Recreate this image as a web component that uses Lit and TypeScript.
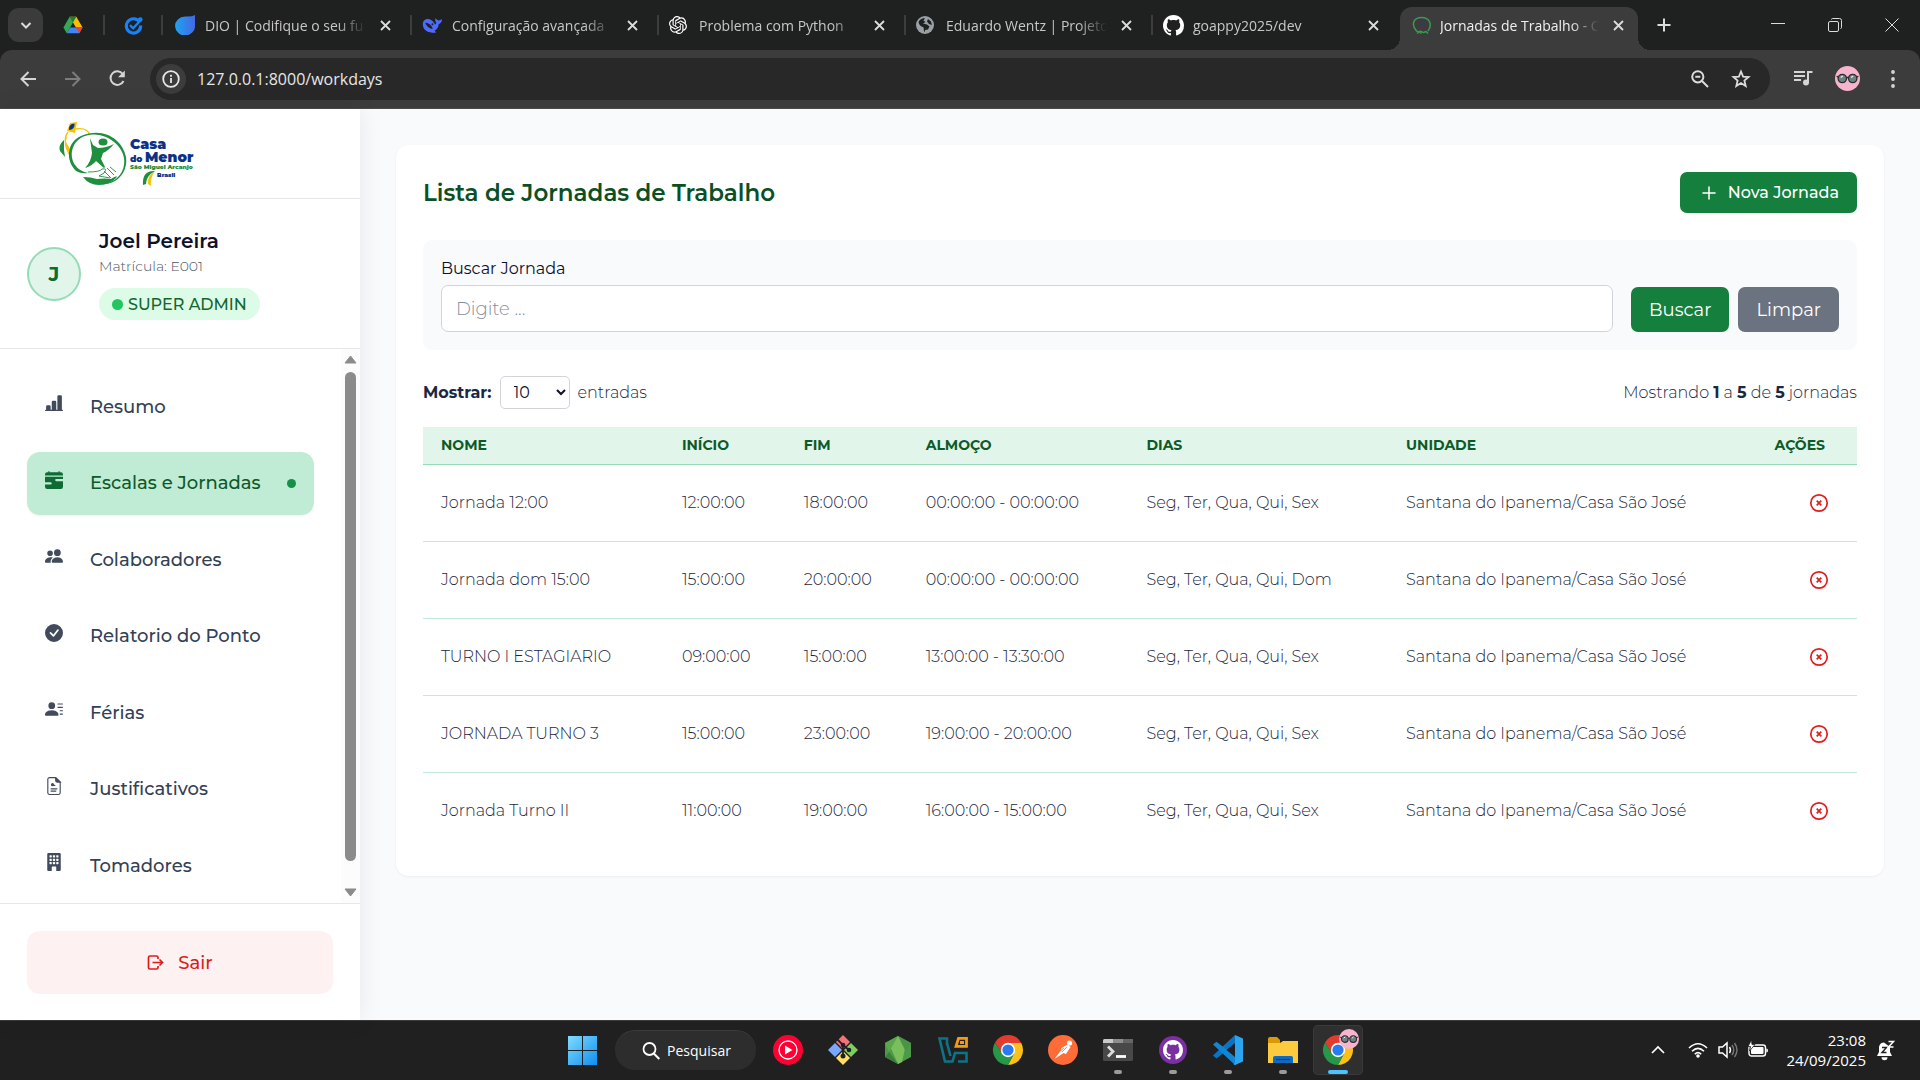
import { LitElement, html, css, svg, nothing } from "lit";
import { customElement, property } from "lit/decorators.js";
import { classMap } from "lit/directives/class-map.js";

const GITHUB =
  "M8 0C3.58 0 0 3.58 0 8c0 3.54 2.29 6.53 5.47 7.59.4.07.55-.17.55-.38 0-.19-.01-.82-.01-1.49-2.01.37-2.53-.49-2.69-.94-.09-.23-.48-.94-.82-1.13-.28-.15-.68-.52-.01-.53.63-.01 1.08.58 1.23.82.72 1.21 1.87.87 2.33.66.07-.52.28-.87.51-1.07-1.78-.2-3.64-.89-3.64-3.95 0-.87.31-1.59.82-2.15-.08-.2-.36-1.02.08-2.12 0 0 .67-.21 2.2.82.64-.18 1.32-.27 2-.27s1.36.09 2 .27c1.53-1.04 2.2-.82 2.2-.82.44 1.1.16 1.92.08 2.12.51.56.82 1.27.82 2.15 0 3.07-1.87 3.75-3.65 3.95.29.25.54.73.54 1.48 0 1.07-.01 1.93-.01 2.2 0 .21.15.46.55.38A8.01 8.01 0 0 0 16 8c0-4.42-3.58-8-8-8";

const OPENAI =
  "M22.2819 9.8211a5.9847 5.9847 0 0 0-.5157-4.9108 6.0462 6.0462 0 0 0-6.5098-2.9A6.0651 6.0651 0 0 0 4.9807 4.1818a5.9847 5.9847 0 0 0-3.9977 2.9 6.0462 6.0462 0 0 0 .7427 7.0966 5.98 5.98 0 0 0 .511 4.9107 6.051 6.051 0 0 0 6.5146 2.9001A5.9847 5.9847 0 0 0 13.2599 24a6.0557 6.0557 0 0 0 5.7718-4.2058 5.9894 5.9894 0 0 0 3.9977-2.9001 6.0557 6.0557 0 0 0-.7475-7.0729zm-9.022 12.6081a4.4755 4.4755 0 0 1-2.8764-1.0408l.1419-.0804 4.7783-2.7582a.7948.7948 0 0 0 .3927-.6813v-6.7369l2.02 1.1686a.071.071 0 0 1 .038.0615v5.5826a4.504 4.504 0 0 1-4.4945 4.4849zm-9.6607-4.1254a4.4708 4.4708 0 0 1-.5346-3.0137l.142.0852 4.783 2.7582a.7712.7712 0 0 0 .7806 0l5.8428-3.3685v2.3324a.0804.0804 0 0 1-.0332.0615L9.74 19.9502a4.4992 4.4992 0 0 1-6.1408-1.6464zM2.3408 7.8956a4.485 4.485 0 0 1 2.3655-1.9728V11.6a.7664.7664 0 0 0 .3879.6765l5.8144 3.3543-2.0201 1.1685a.0757.0757 0 0 1-.071 0l-4.8303-2.7865A4.504 4.504 0 0 1 2.3408 7.872zm16.5963 3.8558L13.1038 8.364 15.1192 7.2a.0757.0757 0 0 1 .071 0l4.8303 2.7913a4.4944 4.4944 0 0 1-.6765 8.1042v-5.6772a.79.79 0 0 0-.407-.667zm2.0107-3.0231l-.142-.0852-4.7735-2.7818a.7759.7759 0 0 0-.7854 0L9.409 9.2297V6.8974a.0662.0662 0 0 1 .0284-.0615l4.8303-2.7866a4.4992 4.4992 0 0 1 6.6802 4.66zM8.3065 12.863l-2.02-1.1638a.0804.0804 0 0 1-.038-.0567V6.0742a4.4992 4.4992 0 0 1 7.3757-3.4537l-.142.0805L8.704 5.459a.7948.7948 0 0 0-.3927.6813zm1.0976-2.3654l2.602-1.4998 2.6069 1.4998v2.9994l-2.5974 1.4997-2.6067-1.4997Z";

const icon = (size: number, box: string, body: unknown) =>
  html`<svg width=${size} height=${size} viewBox=${box} aria-hidden="true">${body}</svg>`;

/* ---------- shared pictures ---------- */

const glasses = svg`
  <circle cx="12" cy="12" r="12" fill="#f7b4cc"/>
  <g stroke="#2e2e30" stroke-width="1.300">
    <circle cx="7" cy="12" r="4" fill="#6d8183"/>
    <circle cx="17" cy="12" r="4" fill="#6d8183"/>
    <path d="M1.500 10l2 .6M22.500 10l-2 .6M11 11h2" fill="none"/>
  </g>
  <path d="M5.500 11l2-1.500M15.500 11l2-1.500" stroke="#e9f0f0" stroke-width="1.200"/>`;

const chromeMark = svg`
  <path d="M15 8h13.300A15 15 0 0 0 2 7.500L8.900 18.500z" fill="#e33b2e"/>
  <path d="M21.100 18.500L15 30A15 15 0 0 0 28.300 8H15z" fill="#fbc116"/>
  <path d="M8.900 18.500L2 7.500A15 15 0 0 0 15 30l6.100-11.500z" fill="#279847"/>
  <circle cx="15" cy="15" r="7.200" fill="#fff"/>
  <circle cx="15" cy="15" r="5.600" fill="#2b7bf0"/>`;

const favicons: Record<string, unknown> = {
  drive: icon(20, "0 0 24 24", svg`
    <path d="M8 2h8l7.500 13h-8z" fill="#fbbc04"/>
    <path d="M8 2L.5 15l4 7L12 9z" fill="#34a853"/>
    <path d="M8 2h8l-4 7z" fill="#188038"/>
    <path d="M4.500 22h15l4-7H8.500z" fill="#4285f4"/>
    <path d="M23.500 15l-4 7-4-7z" fill="#ea4335"/>`),
  tasks: icon(19, "0 0 24 24", svg`
    <path d="M19.500 7.500A9 9 0 1 0 21 12" fill="none" stroke="#1a82f7" stroke-width="4"/>
    <circle cx="20.500" cy="4.500" r="3" fill="#1a82f7"/>
    <path d="M7.500 11.500l4 4 9-9.500" fill="none" stroke="#1a82f7" stroke-width="3"/>`),
  dio: icon(20, "0 0 20 20", svg`
    <defs><linearGradient id="dio"><stop stop-color="#1fa3ee"/><stop offset="1" stop-color="#4468e6"/></linearGradient></defs>
    <path d="M10 1.500Q17 2 20 0V10A10 9.500 0 1 1 10 1.500z" fill="url(#dio)"/>`),
  whale: icon(20, "0 0 24 24", svg`
    <path d="M1 11C1 5 7 3.500 11 6c3 1.800 3.500 4.500 5.500 5.500C18 9.500 15 7 16 4c1.500 1 2 2.500 4 2.500 1.500 0 2.300-1 4-1.500-.2 3.500-1.500 5-4 6-.2 4-2.500 6.500-5 8l2 2c-3 .6-5 .5-7-.3C4.500 20 1 16 1 11z" fill="#4d6bfe"/>
    <path d="M4 9.500c3-.5 7 2 9 7-4 0-7.500-3-9-7z" fill="#1f2120"/><circle cx="12.500" cy="11" r="1.200" fill="#1f2120"/>`),
  openai: icon(18, "0 0 24 24", svg`<path d=${OPENAI} fill="#fff"/>`),
  globe: icon(18, "0 0 18 18", svg`
    <circle cx="9" cy="9" r="9" fill="#9aa0a6"/>
    <path d="M2.500 6C4 3 6.500 2 9 2L7.500 4.500l2 1.500-2.500 1.500 4 1 2.500 2-1.500 3-3 .5V16C7 15 8.500 12 7 11c-2-.5-4-2-4.500-5zM12 3l3 2.500L16 9l-3-1-2-2.500z" fill="#1f2120"/>`),
  github: icon(21, "0 0 16 16", svg`<path d=${GITHUB} fill="#fff"/>`),
  casa: icon(20, "0 0 20 20", svg`
    <path d="M4.500 16C-1.500 9 2 2.500 9.500 2.500S21 9 16 16M4 16q3 0 5.500 2.500M5 18.500q3-3 4.500-2 2 2 4 0 1 0 2.500 2" fill="none" stroke="#3c9950" stroke-width="1.500"/>
    <path d="M1.500 0l3 2M10 6l2 1-3 4 3 3" fill="none" stroke="#32309c" stroke-width="1"/>`),
};

/* ---------- browser frame ---------- */

interface Tab { icon: string; title: string; active?: boolean }

const TABS: Tab[] = [
  { icon: "dio", title: "DIO | Codifique o seu fu" },
  { icon: "whale", title: "Configuração avançada" },
  { icon: "openai", title: "Problema com Python" },
  { icon: "globe", title: "Eduardo Wentz | Projeto" },
  { icon: "github", title: "goappy2025/dev" },
  { icon: "casa", title: "Jornadas de Trabalho - C", active: true },
];

const cross = icon(11, "0 0 11 11", svg`<path d="M1 1l9 9M10 1l-9 9" stroke="currentColor" stroke-width="1.800"/>`);
const line = (d: string, w = 2) =>
  svg`<path d=${d} fill="none" stroke="currentColor" stroke-width=${w} />`;

@customElement("browser-frame")
class BrowserFrame extends LitElement {
  static styles = css`
    :host { display: block; background: #1f2120; color: #dcdcdc; font-family: "Segoe UI", "Open Sans", "Noto Sans", sans-serif; }
    button { border: 0; background: none; color: inherit; padding: 0; font: inherit; display: grid; place-items: center; flex: none; }
    svg { display: block; flex: none; }
    .tabs { display: flex; align-items: center; height: 50px; padding-left: 8px; }
    .picker { width: 35px; height: 34px; border-radius: 11px; background: #3b3b3b; }
    .pinned { width: 58px; height: 20px; display: grid; place-items: center; border-right: 2px solid #3c3d3c; box-sizing: border-box; }
    .pinned:first-of-type { width: 62px; }
    .tab { flex: 0 1 247px; min-width: 0; display: flex; align-items: center; box-sizing: border-box; padding: 0 19px 0 12px; height: 43px; font-size: 14px; }
    .tab .pic { width: 30px; flex: none; }
    .title { flex: 1; min-width: 0; overflow: hidden; white-space: nowrap; color: #c7c7c7; mask-image: linear-gradient(90deg, #000 82%, transparent); }
    .tab button { margin-left: 14px; }
    .tick { width: 2px; height: 20px; margin-right: -2px; background: #3c3d3c; flex: none; }
    .active { flex-basis: 238px; align-self: flex-end; background: #3c3c3c; border-radius: 12px 12px 0 0; padding: 0 14px 7px 12px; margin-left: 2px; position: relative; }
    .active .title { color: #f0f0f0; }
    .active .pic { width: 28px; }
    .active::before, .active::after { content: ""; position: absolute; bottom: 0; width: 12px; height: 12px; }
    .active::before { left: -12px; background: radial-gradient(circle at 0 0, transparent 12px, #3c3c3c 12px); }
    .active::after { right: -12px; background: radial-gradient(circle at 12px 0, transparent 12px, #3c3c3c 12px); }
    .new { width: 52px; height: 40px; }
    .window { margin-left: auto; display: flex; }
    .window button { width: 57px; height: 40px; }
    .bar { display: flex; align-items: center; background: #3c3c3c; height: 59px; box-sizing: border-box; padding: 0 5px 1px 5px; border-radius: 12px 12px 0 0; border-bottom: 1px solid #4a4a4a; }
    .bar > button { width: 45px; height: 42px; color: #d5d5d5; }
    .bar > button.dim { color: #7d7d7d; }
    .omni { flex: 1; height: 42px; border-radius: 21px; background: #282828; display: flex; align-items: center; margin: 0 10px 0 10px; padding: 0 9px 0 6px; }
    .omni .info { width: 30px; height: 30px; border-radius: 15px; background: #3c3c3c; color: #e8e8e8; }
    .omni input { flex: 1; min-width: 0; border: 0; background: none; color: #e6e6e6; font: inherit; font-size: 16px; padding: 0 0 0 11px; outline: 0; }
    .omni .tool { width: 41px; height: 36px; }
  `;

  render() {
    return html`
      <div class="tabs">
        <button class="picker" aria-label="Pesquisar guias">${icon(12, "0 0 12 12", line("M1.500 4l4.500 4.500L10.500 4"))}</button>
        <div class="pinned">${favicons.drive}</div>
        <div class="pinned">${favicons.tasks}</div>
        ${TABS.map((t, i) => html`
          <div class=${classMap({ tab: true, active: !!t.active })}>
            <span class="pic">${favicons[t.icon]}</span>
            <span class="title">${t.title}</span>
            <button aria-label="Fechar guia">${cross}</button>
          </div>
          ${i < TABS.length - 2 ? html`<span class="tick"></span>` : nothing}`)}
        <button class="new" aria-label="Nova guia">${icon(14, "0 0 14 14", line("M7 .5v13M.5 7h13"))}</button>
        <div class="window">
          <button aria-label="Minimizar">${icon(14, "0 0 14 14", line("M0 5.500h14", 1))}</button>
          <button aria-label="Restaurar">${icon(14, "0 0 14 14", svg`<rect x=".5" y="3.500" width="10" height="10" rx="1.500" fill="none" stroke="currentColor"/><path d="M3.500 1.500q0-1 1-1h7q2 0 2 2v7q0 1-1 1" fill="none" stroke="currentColor"/>`)}</button>
          <button aria-label="Fechar">${icon(14, "0 0 14 14", line("M.5 .5l13 13M13.500 .5l-13 13", 1))}</button>
        </div>
      </div>
      <div class="bar">
        <button aria-label="Voltar">${icon(16, "0 0 16 16", line("M16 8H2M8.500 1L1.500 8l7 7"))}</button>
        <button class="dim" aria-label="Avançar">${icon(16, "0 0 16 16", line("M0 8h14M7.500 1l7 7-7 7"))}</button>
        <button aria-label="Recarregar">${icon(17, "0 0 17 17", svg`${line("M14.500 11A6.800 6.800 0 1 1 13.800 4")}<path d="M15.800 .5v6.800H9z" fill="currentColor"/>`)}</button>
        <div class="omni">
          <button class="info" aria-label="Informações do site">${icon(18, "0 0 18 18", svg`<circle cx="9" cy="9" r="7.800" fill="none" stroke="currentColor" stroke-width="1.800"/><path d="M9 8v5M9 4.800v1.900" stroke="currentColor" stroke-width="1.800"/>`)}</button>
          <input aria-label="Endereço" value="127.0.0.1:8000/workdays" />
          <button class="tool" aria-label="Zoom">${icon(18, "0 0 18 18", svg`<circle cx="6.800" cy="6.800" r="5.600" fill="none" stroke="currentColor" stroke-width="2"/>${line("M11 11l6 6M4.300 6.800h5")}`)}</button>
          <button class="tool" aria-label="Favoritos">${icon(20, "0 0 20 20", line("M10 2.500l2.100 5.100 5.500.4-4.200 3.600 1.300 5.400-4.700-2.900L5.300 17l1.300-5.400L2.400 8l5.500-.4z", 1.8))}</button>
        </div>
        <button aria-label="Mídia">${icon(20, "0 0 20 20", svg`${line("M1 3h11M1 7h11M1 11h7")}<circle cx="13" cy="13.500" r="3" fill="currentColor"/>${line("M15 14V3h4.500", 2)}`)}</button>
        <button aria-label="Perfil">${icon(25, "0 0 24 24", glasses)}</button>
        <button aria-label="Menu">${icon(18, "0 0 18 18", svg`<g fill="currentColor"><circle cx="9" cy="2" r="1.900"/><circle cx="9" cy="9" r="1.900"/><circle cx="9" cy="16" r="1.900"/></g>`)}</button>
      </div>`;
  }
}

/* ---------- side navigation ---------- */

const windows = [4, 7, 10].flatMap((x) => [2, 5, 8].map((y) =>
  svg`<rect x=${x} y=${y} width="2" height="2" rx=".4" fill="#fff"/>`));

const NAV = [
  { label: "Resumo", pic: svg`<path d="M11 2a1 1 0 0 1 1-1h2a1 1 0 0 1 1 1v12h.5a.5.5 0 0 1 0 1H.5a.5.5 0 0 1 0-1H1v-3a1 1 0 0 1 1-1h2a1 1 0 0 1 1 1v3h1V7a1 1 0 0 1 1-1h2a1 1 0 0 1 1 1v7h1z"/>` },
  { label: "Escalas e Jornadas", active: true, pic: svg`<path d="M4 .5a.5.5 0 0 0-1 0V1H2a2 2 0 0 0-2 2v1h16V3a2 2 0 0 0-2-2h-1V.5a.5.5 0 0 0-1 0V1H4zM16 7V5H0v5h5a1 1 0 1 1 0 2H0v2a2 2 0 0 0 2 2h12a2 2 0 0 0 2-2V9h-6a1 1 0 1 1 0-2z"/>` },
  { label: "Colaboradores", pic: svg`<path d="M7 14s-1 0-1-1 1-4 5-4 5 3 5 4-1 1-1 1zm4-6a3 3 0 1 0 0-6 3 3 0 0 0 0 6m-5.784 6A2.24 2.24 0 0 1 5 13c0-1.355.68-2.75 1.936-3.72A6.3 6.3 0 0 0 5 9c-4 0-5 3-5 4s1 1 1 1zM4.500 8a2.500 2.500 0 1 0 0-5 2.500 2.500 0 0 0 0 5"/>` },
  { label: "Relatorio do Ponto", pic: svg`<path d="M16 8A8 8 0 1 1 0 8a8 8 0 0 1 16 0m-3.970-3.030a.75.75 0 0 0-1.080.022L7.477 9.417 5.384 7.323a.75.75 0 0 0-1.060 1.060L6.970 11.030a.75.75 0 0 0 1.079-.02l3.992-4.990a.75.75 0 0 0-.01-1.050z"/>` },
  { label: "Férias", pic: svg`<path d="M6 8a3 3 0 1 0 0-6 3 3 0 0 0 0 6m-5 6s-1 0-1-1 1-4 6-4 6 3 6 4-1 1-1 1zM11 3.500a.5.5 0 0 1 .5-.5h4a.5.5 0 0 1 0 1h-4a.5.5 0 0 1-.5-.5m.5 2.500a.5.5 0 0 0 0 1h4a.5.5 0 0 0 0-1zm2 3a.5.5 0 0 0 0 1h2a.5.5 0 0 0 0-1zm0 3a.5.5 0 0 0 0 1h2a.5.5 0 0 0 0-1z"/>` },
  { label: "Justificativos", pic: svg`<path d="M9.500.5H4a1.500 1.500 0 0 0-1.500 1.500v12A1.500 1.500 0 0 0 4 15.500h8a1.500 1.500 0 0 0 1.500-1.500V4.500zM9.500.5V3A1.500 1.500 0 0 0 11 4.500h2.500z" fill="none" stroke="currentColor"/><path d="M9.500 0L14 4.500h-3A1.500 1.500 0 0 1 9.500 3z"/><circle cx="6.700" cy="6.800" r="1.400"/><path d="M6 6.500l3.200.5v1H5.500zM5 10h6v1H5zM5 12h5v1H5z"/>` },
  { label: "Tomadores", pic: svg`<path d="M3 0a1 1 0 0 0-1 1v14a1 1 0 0 0 1 1h3v-3.500a.5.5 0 0 1 .5-.5h3a.5.5 0 0 1 .5.5V16h3a1 1 0 0 0 1-1V1a1 1 0 0 0-1-1z"/>${windows}` },
];

@customElement("side-nav")
class SideNav extends LitElement {
  static styles = css`
    :host { display: flex; flex-direction: column; width: 360px; flex: none; background: #fff; box-shadow: 0 0 24px rgba(15, 23, 42, 0.08); position: relative; font-family: Montserrat, Inter, "Open Sans", sans-serif; }
    .brand { height: 89px; padding-left: 59px; border-bottom: 1px solid #e5e7eb; display: flex; align-items: center; }
    .brand svg { display: block; }
    .word { font-family: Montserrat, Inter, sans-serif; font-weight: 900; fill: #0b3287; }
    .place { fill: #1d8f3f; }
    .user { display: flex; align-items: center; gap: 18px; padding: 27px; height: 149px; box-sizing: border-box; }
    .avatar { width: 54px; height: 54px; box-sizing: border-box; border: 2px solid #94dcb6; border-radius: 50%; background: #e2f5eb; color: #0c6b31; font-weight: 700; font-size: 20px; display: grid; place-items: center; }
    .name { margin: 0; font-size: 20px; line-height: 28px; font-weight: 600; color: #0f1129; }
    .id { margin: 0; font-size: 14px; line-height: 22px; font-weight: 300; color: #4b5563; }
    .role { width: fit-content; margin-top: 11px; display: flex; align-items: center; gap: 5px; height: 32px; padding: 0 13px; border-radius: 16px; background: #dcfce7; color: #12672f; font-size: 16px; font-weight: 500; }
    .role i { width: 11px; height: 11px; border-radius: 50%; background: #22c55e; }
    .scroll { flex: 1; display: flex; border: solid #e5e7eb; border-width: 1px 0; }
    ul { list-style: none; margin: 0; padding: 26px 27px 6px; flex: 1; display: flex; flex-direction: column; justify-content: space-between; }
    a { display: flex; align-items: center; box-sizing: border-box; height: 63px; padding: 0 18px; border-radius: 13px; text-decoration: none; color: #334155; font-size: 18px; font-weight: 500; }
    a svg { width: 18px; margin: 0 27px 7px 0; fill: #414b5c; color: #414b5c; }
    a.active { background: #c0ebd4; color: #0d5a2b; box-shadow: 0 1px 2px rgba(0, 0, 0, 0.06); }
    a.active svg { fill: #0d6b33; }
    a.active::after { content: ""; width: 9px; height: 9px; margin-left: auto; border-radius: 50%; background: #15904a; }
    .track { width: 19px; background: #fcfcfc; display: flex; flex-direction: column; align-items: center; padding: 6px 0; box-sizing: border-box; }
    .track span { flex: 1; width: 11px; border-radius: 6px; background: #8b8b8b; margin: 8px 0 27px; }
    .track svg { display: block; }
    .foot { padding: 27px; height: 116px; box-sizing: border-box; }
    .foot button { width: 100%; height: 63px; border: 0; border-radius: 13px; background: #fef1f1; color: #dc1c1c; font: inherit; font-size: 18px; font-weight: 500; display: flex; align-items: center; justify-content: center; gap: 14px; }
  `;

  render() {
    return html`
      <div class="brand">
        <svg width="144" height="68" viewBox="0 0 144 68" role="img" aria-label="Casa do Menor">
          <path d="M18 2l-7 1-3 8 8 2z" fill="#f5c400"/>
          <path d="M15.500 3.500q-6 0-5.500 6.500 6 0 5.500-6.500z" fill="#0b3287"/>
          <path d="M17 9q11-2 14 6M9 12q-6 8 1 22" fill="none" stroke="#f2c50c" stroke-width="1.300"/>
          <path d="M8 16q-3 4 0 8 3 3 3 9l-4-4q-1-6 1-13z" fill="#f5c400"/>
          <path d="M5 20q-6 5-4 11l5 6-1-7z" fill="#1d8f3f"/>
          <path d="M22 16C8 22 6 40 17 51q5 3 12 2-9-2-13-8C9 34 14 20 26 16 44 10 63 24 65 38c2 14-8 26-24 26 18 2 28-13 26-27C64 21 46 6 22 16z" fill="#1d8f3f"/>
          <ellipse cx="44" cy="22" rx="4.500" ry="3.500" fill="#1d8f3f"/>
          <path d="M31 18l3 7 5 3q8 0 16-4-6 7-11 9l-2 6 4 8-1 1-8-7q-4 5-11 7 6-6 7-15-1-7-2-15z" fill="#1d8f3f"/>
          <path d="M29 52q12 0 14-3 6-1 2 4l-5 3 11 2M48 48l7 7M45 51l7 7M51 47l6 5" fill="none" stroke="#1d8f3f" stroke-width=".9"/>
          <path d="M24 57q8 0 14 2 8-1 14 0 8-5 5-1-6 7-17 7-10 0-16-8z" fill="#1d8f3f"/>
          <text class="word" x="71" y="29" font-size="14">Casa</text>
          <text class="word" x="71" y="42" font-size="9">do</text>
          <text class="word" x="86" y="42" font-size="14">Menor</text>
          <text class="word place" x="71" y="49" font-size="6">São Miguel Arcanjo</text>
          <text class="word" x="98" y="57" font-size="6">Brasil</text>
          <path d="M96 51q-13-1-12 14l3-1q0-8 9-13z" fill="#1d8f3f"/>
          <path d="M96 51q-8 5-7 13l3 2q-1-8 4-15z" fill="#f5c400"/>
        </svg>
      </div>
      <div class="user">
        <div class="avatar">J</div>
        <div>
          <p class="name">Joel Pereira</p>
          <p class="id">Matrícula: E001</p>
          <span class="role"><i></i>SUPER ADMIN</span>
        </div>
      </div>
      <nav class="scroll">
        <ul>
          ${NAV.map((n) => html`<li><a href="#" class=${classMap({ active: !!n.active })}>${icon(18, "0 0 16 16", n.pic)}${n.label}</a></li>`)}
        </ul>
        <div class="track" aria-hidden="true">
          <svg width="13" height="9" viewBox="0 0 13 9"><path d="M6.500 1L12 8H1z" fill="#8b8b8b" stroke="#8b8b8b" stroke-linejoin="round"/></svg>
          <span></span>
          <svg width="13" height="9" viewBox="0 0 13 9"><path d="M6.500 8L12 1H1z" fill="#8b8b8b" stroke="#8b8b8b" stroke-linejoin="round"/></svg>
        </div>
      </nav>
      <div class="foot">
        <button>${icon(17, "0 0 17 17", svg`<g fill="none" stroke="currentColor" stroke-width="1.700"><path d="M11 5V3.500Q11 2 9.500 2H3Q1.500 2 1.500 3.500v10Q1.500 15 3 15h6.500q1.500 0 1.500-1.500V12M5.500 8.500h10M12.500 5.500l3 3-3 3"/></g>`)}Sair</button>
      </div>`;
  }
}

/* ---------- workday list ---------- */

const ROWS = [
  ["Jornada 12:00", "12:00:00", "18:00:00", "00:00:00 - 00:00:00", "Seg, Ter, Qua, Qui, Sex"],
  ["Jornada dom 15:00", "15:00:00", "20:00:00", "00:00:00 - 00:00:00", "Seg, Ter, Qua, Qui, Dom"],
  ["TURNO I ESTAGIARIO", "09:00:00", "15:00:00", "13:00:00 - 13:30:00", "Seg, Ter, Qua, Qui, Sex"],
  ["JORNADA TURNO 3", "15:00:00", "23:00:00", "19:00:00 - 20:00:00", "Seg, Ter, Qua, Qui, Sex"],
  ["Jornada Turno II", "11:00:00", "19:00:00", "16:00:00 - 15:00:00", "Seg, Ter, Qua, Qui, Sex"],
];
const UNIT = "Santana do Ipanema/Casa São José";

@customElement("workday-list")
class WorkdayList extends LitElement {
  @property({ attribute: false }) rows = ROWS;

  static styles = css`
    :host { display: block; flex: 1; min-width: 0; padding: 36px; font-family: Montserrat, Inter, "Open Sans", sans-serif; color: #1c2840; font-size: 16px; }
    button { border: 0; font: inherit; color: #fff; border-radius: 7px; }
    .card { background: #fff; border-radius: 13px; padding: 27px; box-shadow: 0 1px 3px rgba(0, 0, 0, 0.05); }
    .head { display: flex; justify-content: space-between; align-items: center; }
    h1 { margin: 0; font-size: 23px; line-height: 34px; font-weight: 600; color: #0b4f25; }
    .new { height: 41px; padding: 0 18px 0 22px; display: flex; align-items: center; gap: 12px; background: #15803d; font-weight: 500; }
    .filter { margin-top: 27px; padding: 18px; height: 110px; box-sizing: border-box; border-radius: 9px; background: #f9fafc; display: flex; align-items: flex-end; gap: 9px; }
    .field { flex: 1; margin-right: 9px; display: flex; flex-direction: column; gap: 5px; }
    .field label { color: #0f1129; font-weight: 400; line-height: 22px; }
    .field input { height: 47px; box-sizing: border-box; border: 1px solid #d1d5db; border-radius: 7px; padding: 0 14px; font: inherit; font-size: 18px; font-weight: 300; width: 100%; }
    .field input::placeholder { color: #858d9b; opacity: 1; }
    .search, .clear { height: 45px; font-size: 18px; padding: 0 18px; }
    .search { background: #15803d; }
    .clear { background: #6b7280; }
    .meta { margin: 26px 0 18px; display: flex; justify-content: space-between; align-items: center; font-weight: 300; }
    .meta b { font-weight: 700; color: #1c2840; }
    .size { display: flex; align-items: center; gap: 8px; }
    select { width: 70px; height: 33px; border: 1px solid #d1d5db; border-radius: 5px; background: #fff; font: inherit; font-weight: 400; color: #0f1129; padding: 0 0 0 9px; }
    table { width: 100%; border-collapse: collapse; table-layout: fixed; }
    .c-name { width: 16.8%; }
    .c-time { width: 8.5%; }
    .c-lunch { width: 15.4%; }
    .c-days { width: 18.1%; }
    .c-act { width: 10%; }
    th, td { text-align: left; padding: 0 18px; white-space: nowrap; box-sizing: border-box; }
    th { background: #e2f5eb; color: #0c5a29; font-size: 14px; height: 37px; font-weight: 700; border-bottom: 1px solid #94dcb6; }
    th:last-child { text-align: right; padding-right: 32px; }
    td { height: 77px; font-weight: 300; border-bottom: 1px solid #c0ebdb; }
    tr:last-child td { border-bottom: 0; }
    td:last-child { text-align: right; padding-right: 28px; }
    td button { background: none; padding: 0; width: 20px; height: 20px; vertical-align: middle; color: #e11d1d; }
    td svg { display: block; }
  `;

  render() {
    return html`
      <section class="card">
        <div class="head">
          <h1>Lista de Jornadas de Trabalho</h1>
          <button class="new">${icon(14, "0 0 14 14", svg`<path d="M7 1v12M1 7h12" stroke="#fff" stroke-width="1.500" stroke-linecap="round"/>`)}Nova Jornada</button>
        </div>
        <form class="filter" @submit=${(e: Event) => e.preventDefault()}>
          <div class="field">
            <label for="q">Buscar Jornada</label>
            <input id="q" placeholder="Digite ..." />
          </div>
          <button class="search">Buscar</button>
          <button class="clear" type="reset">Limpar</button>
        </form>
        <div class="meta">
          <div class="size">
            <label for="n"><b>Mostrar:</b></label>
            <select id="n"><option>10</option><option>25</option><option>50</option></select>
            <span>entradas</span>
          </div>
          <span>Mostrando <b>1</b> a <b>5</b> de <b>5</b> jornadas</span>
        </div>
        <table>
          <colgroup>
            <col class="c-name" /><col class="c-time" /><col class="c-time" /><col class="c-lunch" /><col class="c-days" /><col /><col class="c-act" />
          </colgroup>
          <thead>
            <tr>${["NOME", "INÍCIO", "FIM", "ALMOÇO", "DIAS", "UNIDADE", "AÇÕES"].map((h) => html`<th scope="col">${h}</th>`)}</tr>
          </thead>
          <tbody>
            ${this.rows.map((r) => html`
              <tr>
                ${r.map((c) => html`<td>${c}</td>`)}
                <td>${UNIT}</td>
                <td><button aria-label="Excluir">${icon(20, "0 0 20 20", svg`<circle cx="10" cy="10" r="8.200" fill="none" stroke="currentColor" stroke-width="1.700"/><path d="M7.700 7.700l4.600 4.600M12.300 7.700l-4.600 4.600" stroke="currentColor" stroke-width="1.700"/>`)}</button></td>
              </tr>`)}
          </tbody>
        </table>
      </section>`;
  }
}

/* ---------- system taskbar ---------- */

interface App { name: string; pic: unknown; state?: "open" | "focus" }

const APPS: App[] = [
  { name: "YouTube Music", pic: svg`<circle cx="15" cy="15" r="15" fill="#ff0033"/><circle cx="15" cy="15" r="9" fill="none" stroke="#fff" stroke-width="1.300"/><path d="M12 10.500l7.500 4.500-7.500 4.500z" fill="#fff"/>` },
  { name: "Git", pic: svg`
    <path d="M15 0l7 7-7 7-7-7z" fill="#f4737a"/><path d="M23 8l7 7-7 7-7-7z" fill="#7fcf5e"/><path d="M15 16l7 7-7 7-7-7z" fill="#ffe066"/><path d="M7 8l7 7-7 7-7-7z" fill="#7aa7ff"/>
    <path d="M9.500 4.500L15 10v11M15 10l6 5" fill="none" stroke="#202020" stroke-width="1.800"/><circle cx="15" cy="10" r="2.300" fill="#202020"/><circle cx="15" cy="21" r="2.500" fill="#202020"/><circle cx="21" cy="15" r="2.300" fill="#202020"/>` },
  { name: "Node.js", pic: svg`<path d="M15 1l13 7v14l-13 7-13-7V8z" fill="#4c9a47"/><path d="M15 1l8 8-4 18-4 2L6 9z" fill="#7abf5c"/><path d="M15 1L2 8l4 9z" fill="#5aa84c"/><path d="M15 1l13 7-5 9z" fill="#4a9447"/><path d="M2 22l4-5 9 12z" fill="#3c7f3c"/>` },
  { name: "VB", pic: svg`<path d="M9 10V3.500H1.500L7 26.500h7.500L17 18h11.500v8.500H20M9 8l3.500 13" fill="none" stroke="#0d7386" stroke-width="2.600"/><path d="M18 11.300l2.500-8h8v8zM22 7.500h4" fill="none" stroke="#f39c12" stroke-width="2.800"/>` },
  { name: "Chrome", pic: chromeMark },
  { name: "Postman", pic: svg`<circle cx="15" cy="15" r="15" fill="#ff6c37"/><circle cx="21.500" cy="8" r="2.600" fill="#fff"/><path d="M19.500 9.500l3 2.500-4.500 7-2.500-1-9 6 6-8 1-3z" fill="#fff"/><path d="M14 17l5-5M12 16l4-3" stroke="#ff6c37" stroke-width=".8"/>` },
  { name: "Terminal", state: "open", pic: svg`<rect y="4" width="30" height="22" rx="1.500" fill="#484848"/><path d="M1.500 4H10v4H0V5.500Q0 4 1.500 4z" fill="#c9c9c9"/><path d="M10 4h10v4H10z" fill="#8e8e8e"/><path d="M20 4h10v4H20z" fill="#666"/><path d="M5 11.500l5 5-5 5" fill="none" stroke="#ddd" stroke-width="2.800"/><path d="M13 21.500h10" stroke="#fff" stroke-width="2.800"/>` },
  { name: "GitHub Desktop", state: "open", pic: svg`<circle cx="15" cy="15" r="14" fill="#7b2fa0"/><g transform="translate(5 5) scale(1.250)"><path d=${GITHUB} fill="#fff"/></g>` },
  { name: "VS Code", state: "open", pic: svg`<path d="M22 0v9L3.500 23.500 0 20.500 21.500 .5z" fill="#0a74c4"/><path d="M22 30v-9L3.500 6.800 0 9.500 21.500 29.500z" fill="#1186d4"/><path d="M22 0l8 3.500v23L22 30q-1 0-1.500-1l1.500-1z" fill="#2ba5f0"/><path d="M22 8v14l-8.500-7z" fill="#202020"/>` },
  { name: "Explorador", state: "open", pic: svg`<path d="M0 4q0-2 2-2h7l3 3v6H0z" fill="#d99a07"/><path d="M0 8h12l3-2h15v22H0z" fill="#fcca3d"/><path d="M5 28v-5q0-2 2-2h16q2 0 2 2v5z" fill="#0f6bc0"/><path d="M8 24.500h14" stroke="#073f7a" stroke-width="1.200"/>` },
  { name: "Chrome perfil", state: "focus", pic: svg`${chromeMark}<svg x="16" y="-6" width="20" height="20" viewBox="0 0 24 24">${glasses}</svg>` },
];

@customElement("task-bar")
class TaskBar extends LitElement {
  static styles = css`
    :host { display: grid; grid-template-columns: 1fr auto 1fr; align-items: center; height: 60px; box-sizing: border-box; background: #202020; border-top: 1px solid #3a3a3a; padding-bottom: 1px; color: #fff; font-family: "Segoe UI", "Open Sans", "Noto Sans", sans-serif; font-size: 14px; }
    button { border: 0; background: none; color: inherit; font: inherit; padding: 0; display: grid; place-items: center; }
    svg { display: block; overflow: visible; }
    .apps { grid-column: 2; display: flex; align-items: center; gap: 5px; }
    .app { width: 50px; height: 50px; border-radius: 5px; position: relative; }
    .open::after, .focus::after { content: ""; position: absolute; bottom: 1px; left: 21px; width: 8px; height: 4px; border-radius: 2px; background: #9b9b9b; }
    .focus { background: #2f2f2f; box-shadow: inset 0 0 0 1px #3a3a3a; }
    .focus::after { width: 20px; left: 15px; background: #4cc2ff; }
    .find { width: 141px; height: 40px; margin: 0 2px; border-radius: 20px; background: #2d2d2d; border-top: 1px solid #3b3b3b; display: flex; align-items: center; justify-content: center; gap: 7px; padding-left: 3px; }
    .tray { display: flex; align-items: center; justify-content: flex-end; gap: 10px; padding-right: 24px; }
    .up { margin-right: 13px; }
    .clock { margin-left: 8px; text-align: right; font-size: 15px; line-height: 20px; }
  `;

  render() {
    return html`
      <div class="apps">
        <button class="app" aria-label="Iniciar">${icon(29, "0 0 29 29", svg`<defs><linearGradient id="w" x2="1" y2="1"><stop stop-color="#7fdcff"/><stop offset="1" stop-color="#0f8ff0"/></linearGradient></defs><path d="M0 0h14v14H0zM15 0h14v14H15zM0 15h14v14H0zM15 15h14v14H15z" fill="url(#w)"/>`)}</button>
        <button class="find">${icon(18, "0 0 18 18", svg`<circle cx="7.500" cy="7" r="6" fill="none" stroke="#fff" stroke-width="1.800"/><path d="M11.800 11.500l5.500 5.500" stroke="#fff" stroke-width="2"/>`)}Pesquisar</button>
        ${APPS.map((a) => html`<button class="app ${a.state ?? ""}" aria-label=${a.name}>${icon(30, "0 0 30 30", a.pic)}</button>`)}
      </div>
      <div class="tray">
        <button class="up" aria-label="Ícones ocultos">${icon(14, "0 0 14 14", svg`<path d="M1 10l6-6 6 6" fill="none" stroke="#fff" stroke-width="1.700"/>`)}</button>
        ${icon(20, "0 0 20 20", svg`<g fill="none" stroke="#fff" stroke-width="1.600"><path d="M1 8q9-8.500 18 0M4 11.300q6-6 12 0M6.800 14.300q3.200-3.200 6.400 0"/></g><circle cx="10" cy="16" r="1.800" fill="#fff"/>`)}
        ${icon(20, "0 0 20 20", svg`<path d="M1 7h3.500L9 3v14l-4.500-4H1z" fill="none" stroke="#fff" stroke-width="1.500"/><path d="M11.500 7q2 3 0 6" fill="none" stroke="#fff" stroke-width="1.400"/><path d="M14 5q3.500 5 0 10M16.500 3q5 7 0 14" fill="none" stroke="#777" stroke-width="1.400"/>`)}
        ${icon(20, "0 0 20 20", svg`<rect x="1" y="5" width="16.500" height="11" rx="2.500" fill="none" stroke="#fff" stroke-width="1.400"/><rect x="3" y="7" width="12.500" height="7" rx="1" fill="#fff"/><path d="M18.300 8.500q1.700 0 1.700 2t-1.700 2z" fill="#fff"/><path d="M3.500 0L0 6.500h2.500L1.500 11 7 4.500H4z" fill="#fff" stroke="#202020" stroke-width=".8"/>`)}
        <div class="clock"><div>23:08</div><div>24/09/2025</div></div>
        ${icon(20, "0 0 20 20", svg`<path d="M8 2.500C4 2.500 3 6 3 8v4l-2 4h15l-2-4V7z" fill="#fff"/><path d="M5.500 17.200a3 3 0 0 0 6 0z" fill="#fff"/><path d="M6 7.500h4.500L6 12.500h4.500" fill="none" stroke="#202020" stroke-width="1.400"/><path d="M12.500 1.500h5l-5 5.500h5" fill="none" stroke="#fff" stroke-width="1.500"/>`)}
      </div>`;
  }
}

/* ---------- page ---------- */

@customElement("app-root")
class AppRoot extends LitElement {
  static styles = css`
    :host { display: flex; flex-direction: column; min-height: 100vh; background: #f9fafc; }
    .page { flex: 1; display: flex; }
  `;

  render() {
    return html`
      <browser-frame></browser-frame>
      <div class="page">
        <side-nav></side-nav>
        <workday-list></workday-list>
      </div>
      <task-bar></task-bar>`;
  }
}
